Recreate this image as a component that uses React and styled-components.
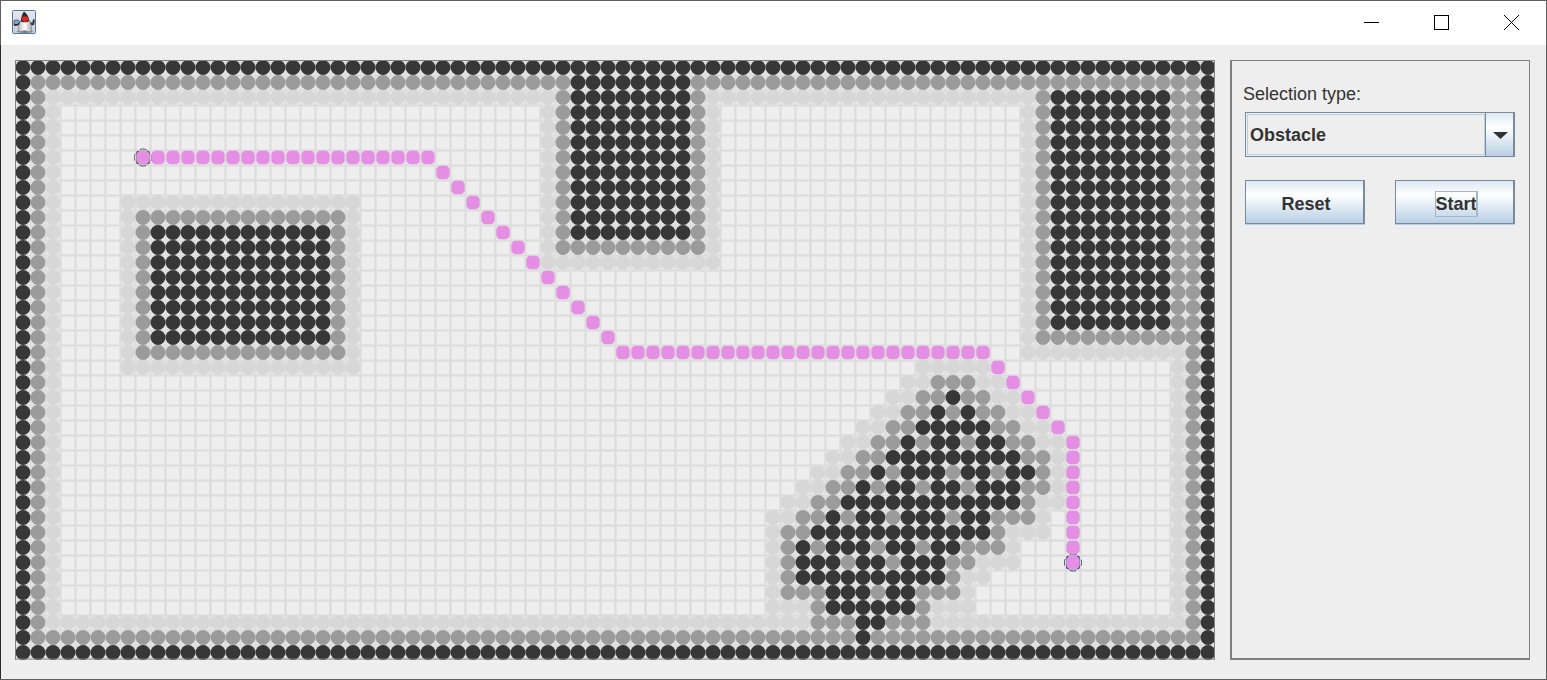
import React from "react";
import styled, { createGlobalStyle } from "styled-components";

const GlobalStyle = createGlobalStyle`
  * { box-sizing: border-box; }
  body { margin: 0; background: #eeeeee; font-family: "Liberation Sans", Arial, sans-serif; color: #333333; }
`;

const CELL = 15;
const COLS = 80;
const ROWS = 40;

/* Each entry is [row, firstColumn, lastColumn, ...more column pairs]. */
const ROCK = [
  [22, 62, 62],
  [23, 61, 61, 63, 63],
  [24, 60, 64],
  [25, 59, 59, 61, 62, 64, 65],
  [26, 58, 66],
  [27, 57, 57, 59, 61, 63, 64, 66, 67],
  [28, 56, 56, 58, 59, 61, 62, 64, 66],
  [29, 55, 66],
  [30, 54, 54, 56, 57, 59, 61, 63, 64],
  [31, 53, 64],
  [32, 52, 52, 54, 56, 58, 59, 61, 62],
  [33, 52, 54, 56, 57, 59, 61],
  [34, 52, 61],
  [35, 54, 56, 58, 59],
  [36, 54, 59],
  [37, 56, 57],
  [38, 56, 56],
];

/* Rectangles as [firstColumn, firstRow, lastColumn, lastRow]. */
const BLOCKS = [
  [0, 0, 79, 0],
  [0, 39, 79, 39],
  [0, 0, 0, 39],
  [79, 0, 79, 39],
  [9, 11, 20, 18],
  [37, 1, 44, 11],
  [69, 2, 76, 17],
];

const WAYPOINTS = [[8, 6], [27, 6], [40, 19], [64, 19], [70, 25], [70, 33]];

function buildCells() {
  const solid = Array.from({ length: ROWS }, () => Array(COLS).fill(false));
  BLOCKS.forEach(([c0, r0, c1, r1]) => {
    for (let r = r0; r <= r1; r++) for (let c = c0; c <= c1; c++) solid[r][c] = true;
  });
  ROCK.forEach(([r, ...spans]) => {
    for (let i = 0; i < spans.length; i += 2)
      for (let c = spans[i]; c <= spans[i + 1]; c++) solid[r][c] = true;
  });
  const near = (c, r, d) => {
    for (let y = Math.max(0, r - d); y <= Math.min(ROWS - 1, r + d); y++)
      for (let x = Math.max(0, c - d); x <= Math.min(COLS - 1, c + d); x++)
        if (solid[y][x]) return true;
    return false;
  };
  const cells = [];
  for (let r = 0; r < ROWS; r++)
    for (let c = 0; c < COLS; c++) {
      const fill = solid[r][c] ? "#373737" : near(c, r, 1) ? "#9b9b9b" : near(c, r, 2) ? "#d7d7d7" : null;
      if (fill) cells.push({ c, r, fill });
    }
  return cells;
}

function buildPath() {
  const path = [WAYPOINTS[0]];
  for (let i = 1; i < WAYPOINTS.length; i++) {
    const [c1, r1] = WAYPOINTS[i];
    let [c, r] = WAYPOINTS[i - 1];
    while (c !== c1 || r !== r1) {
      c += Math.sign(c1 - c);
      r += Math.sign(r1 - r);
      path.push([c, r]);
    }
  }
  return path;
}

const CELLS = buildCells();
const PATH = buildPath();

const Window = styled.div`
  min-height: 100vh;
  display: flex;
  flex-direction: column;
  border: 1px solid #5f5f5f;
  border-left: 0;
`;

const TitleBar = styled.header`
  height: 44px;
  display: flex;
  align-items: center;
  justify-content: space-between;
  padding: 0 0 2px 11px;
  border-left: 1px solid #5f5f5f;
  background: #ffffff;
`;

const WindowControls = styled.div`
  display: flex;
  height: 100%;
`;

const WindowButton = styled.button`
  width: 70px;
  padding: 0;
  border: 0;
  background: transparent;
  display: grid;
  place-items: center;
`;

const Content = styled.main`
  flex: 1;
  display: flex;
  align-items: stretch;
  gap: 15px;
  padding: 15px 16px 19px 14px;
  border-left: 1px solid #2b2b2b;
`;

const BoardFrame = styled.section`
  flex: 1;
  min-width: 0;
  display: flex;
  align-items: flex-start;
`;

const BoardDrawing = styled.svg`
  display: block;
  width: 100%;
  height: auto;
`;

const SidePanel = styled.aside`
  flex: 0 0 300px;
  border: 1px solid #808080;
  border-left-width: 2px;
  border-bottom-width: 2px;
  padding: 21px 14px 0 13px;
`;

const FieldLabel = styled.label`
  display: block;
  margin-left: -2px;
  font-size: 18px;
  line-height: 24px;
`;

const Combo = styled.div`
  display: grid;
  grid-template-columns: 1fr 29px;
  height: 45px;
  margin-top: 6px;
  border: 1px solid #7a8a99;
`;

const ComboSelect = styled.select`
  grid-area: 1 / 1 / 2 / 3;
  appearance: none;
  width: 100%;
  margin: 0;
  padding: 0 0 0 4px;
  border: 0;
  border-radius: 0;
  outline: none;
  background: transparent;
  color: #333333;
  font: bold 18px "Liberation Sans", Arial, sans-serif;
`;

const ComboFocus = styled.span`
  grid-area: 1 / 1;
  margin: 1px 0 1px 1px;
  border: 1px solid #b8cfe5;
  pointer-events: none;
`;

const ComboArrow = styled.span`
  grid-area: 1 / 2;
  display: grid;
  place-items: center;
  padding: 2px 0 0 2px;
  border-left: 1px solid #7a8a99;
  border-right: 1px solid #7a8a99;
  background: linear-gradient(#dde8f3 0%, #ffffff 33%, #b8cfe5 100%);
  pointer-events: none;
`;

const ButtonRow = styled.div`
  display: grid;
  grid-template-columns: 1fr 1fr;
  gap: 30px;
  margin-top: 23px;
`;

const MetalButton = styled.button`
  height: 44px;
  padding: 3px 0 0 3px;
  border: 1px solid #7a8a99;
  border-right-width: 2px;
  border-radius: 0;
  background: linear-gradient(#dde8f3 0%, #ffffff 33%, #b8cfe5 100%);
  box-shadow: 0 1px 0 #b8cfe5;
  color: #333333;
  font: bold 18px/24px "Liberation Sans", Arial, sans-serif;
`;

const FocusText = styled.span`
  display: block;
  width: 43px;
  margin: 0 auto;
  overflow: hidden;
  border: 1px solid #a3b8cc;
  border-right-width: 2px;
  text-align: left;
`;

function DukeIcon() {
  return (
    <svg width="24" height="24" viewBox="0 0 24 24" aria-hidden="true">
      <defs>
        <linearGradient id="tile" x1="0" y1="0" x2="0" y2="1">
          <stop offset="0" stopColor="#e6e8f2" />
          <stop offset="1" stopColor="#c5cbd8" />
        </linearGradient>
        <linearGradient id="belly" x1="0" y1="0" x2="1" y2="0">
          <stop offset="0" stopColor="#bdbdbd" />
          <stop offset="0.5" stopColor="#ffffff" />
          <stop offset="1" stopColor="#aaaaaa" />
        </linearGradient>
      </defs>
      <rect x="0.5" y="0.5" width="23" height="23" rx="1" fill="url(#tile)" stroke="#58779b" />
      <ellipse cx="13" cy="21.5" rx="8" ry="1.5" fill="#777b84" />
      <path d="M2 10.5L6 10L8 12L6 14.5L2 14.5Z" fill="#6faee0" stroke="#444" strokeWidth="0.8" />
      <path d="M2 14.5C5 16.5 7 14 9 12M18 12C20 15.5 22 15 21.5 12M21 13L22 9.5" fill="none" stroke="#2b2b2b" strokeWidth="1.8" />
      <path d="M9 10C7.5 13 6 17 6.5 21C9 22.5 11 20.5 13 20.5C15 21.5 18 22.5 19.5 21C20 17 19 13 17 10Z" fill="url(#belly)" stroke="#777" strokeWidth="0.5" />
      <path d="M8.8 11.5C9 7.5 10 4 12 1.5C14.5 3 16.5 6 17.3 11C16 12.5 10.5 12.8 8.8 11.5Z" fill="#2e2e2e" />
      <ellipse cx="13" cy="9" rx="3" ry="2.8" fill="#ea2424" />
    </svg>
  );
}

function Marker({ x, y, color }) {
  return (
    <g>
      <circle cx={x} cy={y} r="8.5" fill="#eeeeee" />
      <circle cx={x} cy={y} r="8.5" fill="none" stroke={color} strokeWidth="0.9" strokeDasharray="6.675 6.675" strokeDashoffset="3.3375" />
      <rect x={x - 6.8} y={y - 6.8} width="13.6" height="13.6" rx="2" fill={color} />
    </g>
  );
}

function Board() {
  return (
    <BoardDrawing viewBox="0 0 1200 600" role="img" aria-label="Path planning grid">
      <defs>
        <pattern id="grid" width={CELL} height={CELL} patternUnits="userSpaceOnUse">
          <rect width={CELL} height={CELL} fill="#dcdcdc" />
          <rect x="1" y="1" width="14" height="14" fill="#e3e3e3" />
          <rect x="2" y="2" width="12" height="12" fill="#eeeeee" />
        </pattern>
      </defs>
      <rect width="1200" height="600" fill="url(#grid)" />
      {CELLS.map(({ c, r, fill }) => (
        <circle key={`${c}-${r}`} cx={c * CELL + 8} cy={r * CELL + 7.5} r="7.5" fill={fill} />
      ))}
      <Marker x={128} y={97.5} color="#24572a" />
      <Marker x={1058} y={502.5} color="#1f3566" />
      {PATH.map(([c, r]) => (
        <rect key={`${c}-${r}`} x={c * CELL + 1.3} y={r * CELL + 0.8} width="13.4" height="13.4" rx="4.5" fill="#e48fe4" />
      ))}
      <path d="M0 0.5H1200M1199.5 0V600M0 599H1200M0.5 0V600" fill="none" stroke="#808080" />
    </BoardDrawing>
  );
}

export default function App() {
  return (
    <>
      <GlobalStyle />
      <Window>
        <TitleBar>
          <DukeIcon />
          <WindowControls>
            <WindowButton aria-label="Minimize">
              <svg width="15" height="15"><path d="M0 7.5H15" stroke="#000" /></svg>
            </WindowButton>
            <WindowButton aria-label="Maximize">
              <svg width="15" height="15"><rect x="0.5" y="0.5" width="14" height="14" fill="none" stroke="#000" /></svg>
            </WindowButton>
            <WindowButton aria-label="Close">
              <svg width="15" height="15"><path d="M0 0L15 15M15 0L0 15" stroke="#000" /></svg>
            </WindowButton>
          </WindowControls>
        </TitleBar>
        <Content>
          <BoardFrame>
            <Board />
          </BoardFrame>
          <SidePanel>
            <FieldLabel htmlFor="selection-type">Selection type:</FieldLabel>
            <Combo>
              <ComboSelect id="selection-type" defaultValue="Obstacle">
                <option>Obstacle</option>
              </ComboSelect>
              <ComboFocus />
              <ComboArrow>
                <svg width="15" height="7"><path d="M0 0H15L7.5 7Z" fill="#333" /></svg>
              </ComboArrow>
            </Combo>
            <ButtonRow>
              <MetalButton type="button">Reset</MetalButton>
              <MetalButton type="button"><FocusText>Start</FocusText></MetalButton>
            </ButtonRow>
          </SidePanel>
        </Content>
      </Window>
    </>
  );
}
